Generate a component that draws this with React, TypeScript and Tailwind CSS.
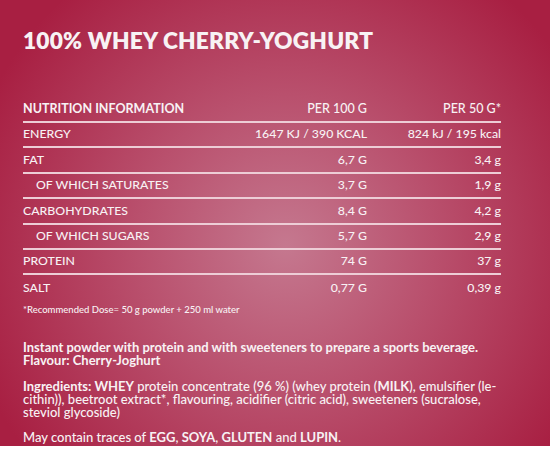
export default function App() {
  const rows: [string, string, string, boolean][] = [
    ["ENERGY", "1647 KJ / 390 KCAL", "824 kJ / 195 kcal", false],
    ["FAT", "6,7 G", "3,4 g", false],
    ["OF WHICH SATURATES", "3,7 G", "1,9 g", true],
    ["CARBOHYDRATES", "8,4 G", "4,2 g", false],
    ["OF WHICH SUGARS", "5,7 G", "2,9 g", true],
    ["PROTEIN", "74 G", "37 g", false],
    ["SALT", "0,77 G", "0,39 g", false],
  ];
  return (
    <div className="w-[550px] h-[450px] bg-white overflow-hidden" style={{ fontFamily: "Lato, 'Open Sans', sans-serif" }}>
      <div className="h-[446px] overflow-hidden bg-[radial-gradient(ellipse_60%_75%_at_52%_55%,#c5788f_0%,#b9506d_45%,#a81f42_100%)] text-[#f8f2f4] px-[23px] pt-[26px]">
        <h1 className="text-[22.7px] font-extrabold leading-[30px] tracking-[0.2px]">100% WHEY CHERRY-YOGHURT</h1>
        <div className="mt-[42px] w-[478px]">
          <div className="flex items-center h-[25px] text-[12.5px] font-bold border-b-2 border-[#edcdd6]">
            <div className="flex-1">NUTRITION INFORMATION</div>
            <div className="w-[150px] text-right font-medium text-[12.5px]">PER 100 G</div>
            <div className="w-[134px] text-right font-medium text-[12.5px]">PER 50 G*</div>
          </div>
          {rows.map(([a, b, c, ind], i) => (
            <div key={i} className={`flex items-center h-[25.4px] text-[12.3px] font-medium ${i < rows.length - 1 ? "border-b-2 border-[#edcdd6]" : ""}`}>
              <div className={`flex-1 ${ind ? "pl-[13px]" : ""}`}>{a}</div>
              <div className="w-[150px] text-right">{b}</div>
              <div className="w-[134px] text-right">{c}</div>
            </div>
          ))}
        </div>
        <p className="text-[9.5px] leading-[14px] mt-[2px] font-medium">*Recommended Dose= 50 g powder + 250 ml water</p>
        <div className="w-[482px]">
          <p className="mt-[24px] text-[13px] font-bold leading-[13px]">
            Instant powder with protein and with sweeteners to prepare a sports beverage.
            <br />
            Flavour: Cherry-Joghurt
          </p>
          <p className="mt-[13px] text-[13px] leading-[13px] font-medium">
            <b>Ingredients: WHEY</b> protein concentrate (96 %) (whey protein (<b>MILK</b>), emulsifier (le-cithin)), beetroot extract*, flavouring, acidifier (citric acid), sweeteners (sucralose, steviol glycoside)
          </p>
          <p className="mt-[12px] text-[13px] leading-[13px] font-medium">
            May contain traces of <b>EGG</b>, <b>SOYA</b>, <b>GLUTEN</b> and <b>LUPIN</b>.
          </p>
        </div>
      </div>
    </div>
  );
}
